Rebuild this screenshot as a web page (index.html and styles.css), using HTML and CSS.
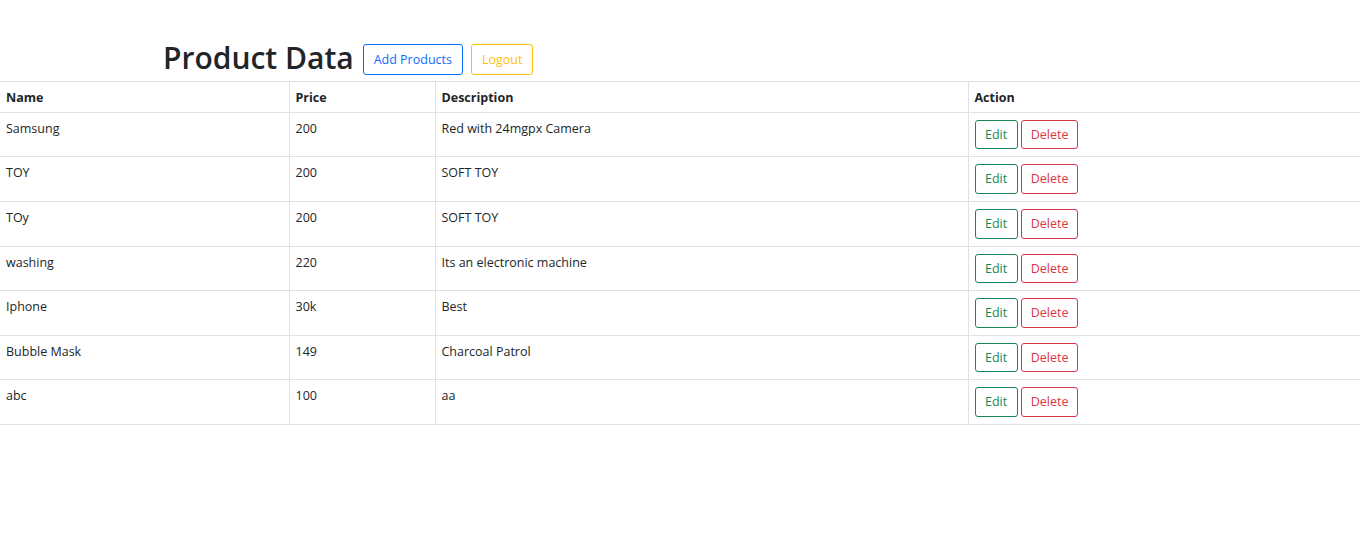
FILE: index.html
```html
<!DOCTYPE html>
<html>
<head>
<meta charset="utf-8">
<link rel="stylesheet" href="styles.css">
</head>
<body>
<div class="page">
  <div class="head">
    <h1 class="title">Product Data</h1>
    <button class="btn btn-blue">Add Products</button>
    <button class="btn btn-yellow">Logout</button>
  </div>
  <table class="grid">
    <thead>
      <tr><th class="c1">Name</th><th class="c2">Price</th><th class="c3">Description</th><th class="c4">Action</th></tr>
    </thead>
    <tbody>
      <tr><td>Samsung</td><td>200</td><td>Red with 24mgpx Camera</td><td class="act"><button class="btn btn-green">Edit</button><button class="btn btn-red">Delete</button></td></tr>
      <tr><td>TOY</td><td>200</td><td>SOFT TOY</td><td class="act"><button class="btn btn-green">Edit</button><button class="btn btn-red">Delete</button></td></tr>
      <tr><td>TOy</td><td>200</td><td>SOFT TOY</td><td class="act"><button class="btn btn-green">Edit</button><button class="btn btn-red">Delete</button></td></tr>
      <tr><td>washing</td><td>220</td><td>Its an electronic machine</td><td class="act"><button class="btn btn-green">Edit</button><button class="btn btn-red">Delete</button></td></tr>
      <tr><td>Iphone</td><td>30k</td><td>Best</td><td class="act"><button class="btn btn-green">Edit</button><button class="btn btn-red">Delete</button></td></tr>
      <tr><td>Bubble Mask</td><td>149</td><td>Charcoal Patrol</td><td class="act"><button class="btn btn-green">Edit</button><button class="btn btn-red">Delete</button></td></tr>
      <tr><td>abc</td><td>100</td><td>aa</td><td class="act"><button class="btn btn-green">Edit</button><button class="btn btn-red">Delete</button></td></tr>
    </tbody>
  </table>
</div>
</body>
</html>
```
FILE: styles.css
```css
* { box-sizing: border-box; }
html, body { margin: 0; padding: 0; background: #fff; }
body {
  font-family: "Open Sans", "Noto Sans", sans-serif;
  font-size: 12.5px;
  line-height: 1.5;
  color: #212529;
}
.page { padding-top: 38px; }
.head {
  display: flex;
  align-items: center;
  padding-left: 163px;
  height: 43px;
}
.title {
  margin: 0 9px 0 0;
  font-size: 30px;
  font-weight: 600;
  line-height: 1.2;
  color: #212529;
  position: relative;
  top: -2px;
}
.btn {
  font-family: inherit;
  font-size: 12.5px;
  line-height: 19.5px;
  height: 30px;
  padding: 4px 9px;
  background: #fff;
  border: 1px solid;
  border-radius: 3px;
  cursor: pointer;
}
.head .btn { margin-right: 8px; padding: 4px 10px; height: 30.5px; }
.btn-blue { color: #0d6efd; border-color: #0d6efd; }
.btn-yellow { color: #ffc107; border-color: #ffc107; }
.btn-green { color: #198754; border-color: #198754; }
.btn-red { color: #dc3545; border-color: #dc3545; }
.grid {
  width: 100%;
  border-collapse: collapse;
  margin-top: 0;
}
.grid th, .grid td {
  border: 1px solid #dee2e6;
  text-align: left;
  vertical-align: top;
  padding: 7px 6px;
}
.grid tr > :first-child { border-left: none; }
.grid tr > :last-child { border-right: none; }
.grid th { font-weight: 700; padding: 7px 6px 4px; }
.c1 { width: 289px; }
.c2 { width: 146px; }
.c3 { width: 533px; }
.act .btn { margin: 0 3px 0 0; height: 29.6px; vertical-align: top; }
.act .btn-green { padding: 4px 9.5px; }
.act .btn-red { padding: 4px 9px; }
```
